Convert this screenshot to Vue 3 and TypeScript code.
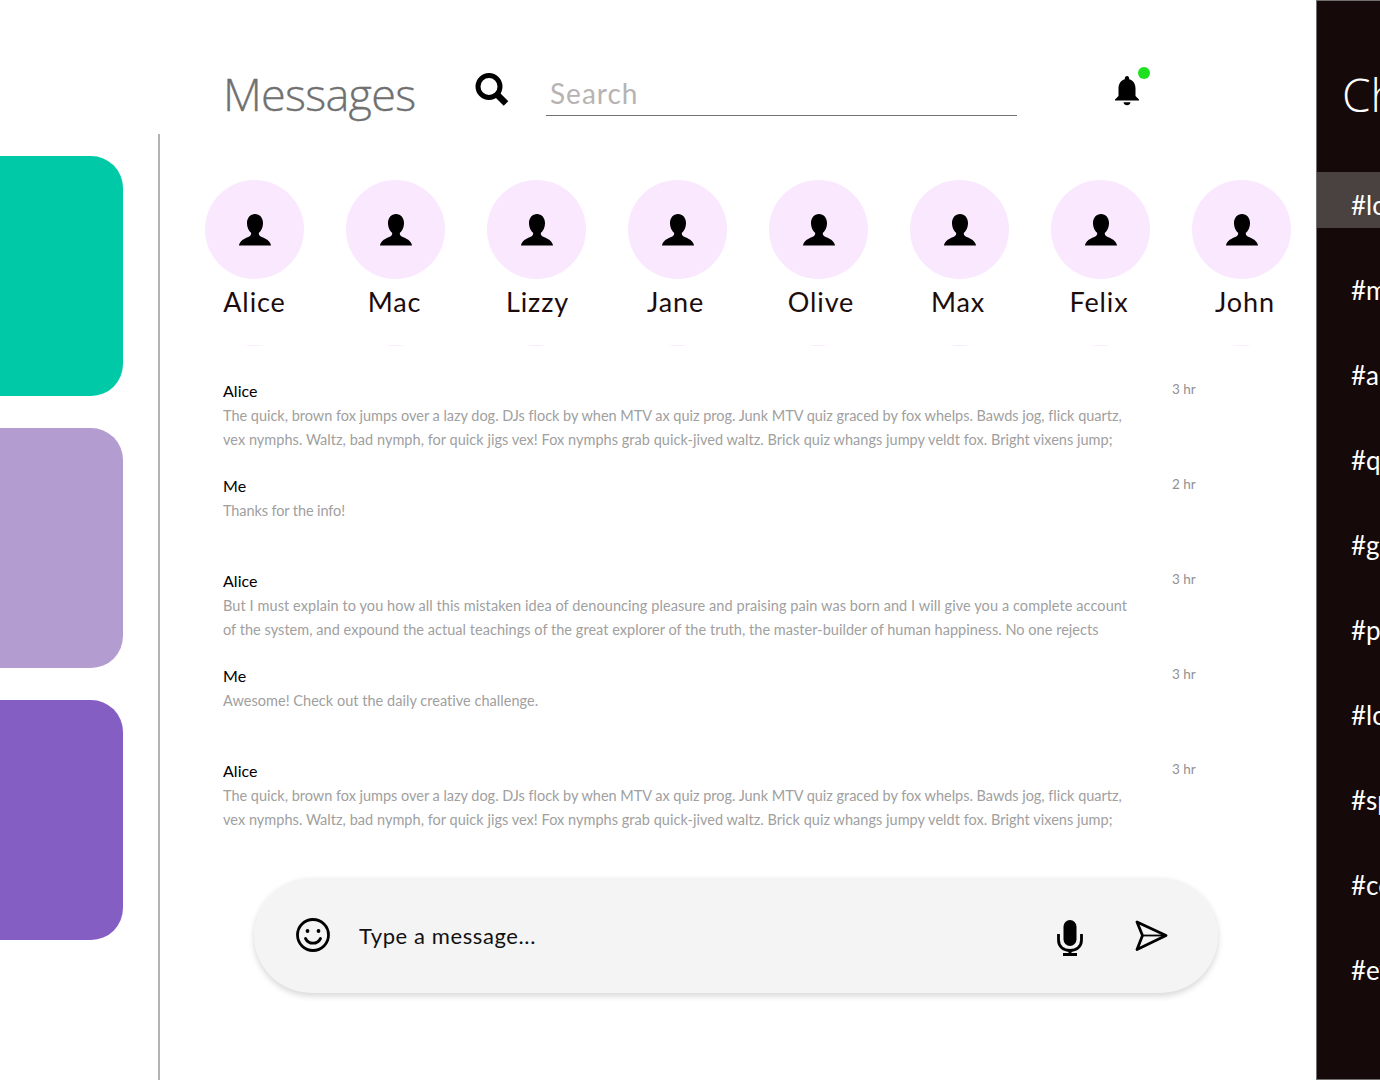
<script setup lang="ts">
interface Line { text: string; ls: number }
interface Msg { who: string; time: string; lines: Line[] }
interface Person { name: string; shift: number }
const people: Person[] = [
  { name: 'Alice', shift: 0 },
  { name: 'Mac', shift: -2 },
  { name: 'Lizzy', shift: 2 },
  { name: 'Jane', shift: -4 },
  { name: 'Olive', shift: 5 },
  { name: 'Max', shift: -3 },
  { name: 'Felix', shift: -3 },
  { name: 'John', shift: 7 },
]
const fox: Line[] = [
  { text: 'The quick, brown fox jumps over a lazy dog. DJs flock by when MTV ax quiz prog. Junk MTV quiz graced by fox whelps. Bawds jog, flick quartz,', ls: -0.02 },
  { text: 'vex nymphs. Waltz, bad nymph, for quick jigs vex! Fox nymphs grab quick-jived waltz. Brick quiz whangs jumpy veldt fox. Bright vixens jump;', ls: 0.03 },
]
const messages: Msg[] = [
  { who: 'Alice', time: '3 hr', lines: fox },
  { who: 'Me', time: '2 hr', lines: [{ text: 'Thanks for the info!', ls: -0.1 }] },
  { who: 'Alice', time: '3 hr', lines: [
    { text: 'But I must explain to you how all this mistaken idea of denouncing pleasure and praising pain was born and I will give you a complete account', ls: 0.08 },
    { text: 'of the system, and expound the actual teachings of the great explorer of the truth, the master-builder of human happiness. No one rejects', ls: 0.036 },
  ] },
  { who: 'Me', time: '3 hr', lines: [{ text: 'Awesome! Check out the daily creative challenge.', ls: 0.03 }] },
  { who: 'Alice', time: '3 hr', lines: fox },
]
const channels: string[] = ['#love', '#music', '#art', '#quotes', '#games', '#photos', '#lol', '#sports', '#code', '#events']
</script>

<template>
  <div class="page">
    <aside class="side">
      <div class="card teal"></div>
      <div class="card lilac"></div>
      <div class="card purple"></div>
    </aside>

    <main class="main">
      <header class="head">
        <h1 class="title">Messages</h1>
        <svg class="search-icon" width="34" height="34" viewBox="0 0 34 34">
          <circle cx="14" cy="13.500" r="11" fill="none" stroke="#000" stroke-width="5" />
          <path d="M21.500 21 L31 30.500" stroke="#000" stroke-width="6.500" fill="none" />
        </svg>
        <input class="search" placeholder="Search" />
        <div class="bell">
          <svg width="28" height="31" viewBox="0 0 28 31">
            <path d="M14 1c1.300 0 2.200 1 2.200 2.300v.9C20.300 5.300 22.500 9 22.500 13.500v7.500l3.500 3.400v1H2v-1l3.500-3.400v-7.500C5.500 9 7.700 5.300 11.800 4.200v-.9C11.800 2 12.700 1 14 1zM10.500 27.200h7C17.300 29 15.800 30.200 14 30.200s-3.300-1.200-3.500-3z" fill="#000" />
          </svg>
          <span class="dot"></span>
        </div>
      </header>

      <section class="people">
        <div v-for="p in people" :key="p.name" class="person">
          <div class="avatar">
            <svg width="34" height="33" viewBox="0 0 36 34" preserveAspectRatio="none">
              <path d="M18 1c-5 0-8.500 4-8.500 9.500 0 4.500 2 8 4.500 10 0 1.800-.5 2.800-2 3.600C7 26.500 2 27.700 1 33.500h34c-1-5.800-6-7-11-9.400-1.500-.8-2-1.800-2-3.600 2.500-2 4.500-5.500 4.500-10C26.500 5 23 1 18 1z" fill="#000" />
            </svg>
          </div>
          <div class="name" :style="{ marginLeft: p.shift + 'px' }">{{ p.name }}</div>
        </div>
        <div v-for="p in people" :key="p.name + '-next'" class="avatar"></div>
      </section>

      <section class="list">
        <article v-for="(m, i) in messages" :key="i" class="msg">
          <div class="msg-body">
            <div class="who">{{ m.who }}</div>
            <p v-for="(l, j) in m.lines" :key="j" class="line" :style="{ letterSpacing: l.ls + 'px' }">{{ l.text }}</p>
          </div>
          <div class="time">{{ m.time }}</div>
        </article>
      </section>

      <div class="composer">
        <svg class="smile" width="36" height="36" viewBox="0 0 36 36">
          <circle cx="18" cy="18" r="15.500" fill="none" stroke="#000" stroke-width="2.800" />
          <circle cx="12.500" cy="14" r="1.900" fill="#000" />
          <circle cx="23.500" cy="14" r="1.900" fill="#000" />
          <path d="M10.500 21.500c1.500 3 4.300 4.700 7.500 4.700s6-1.700 7.500-4.700" fill="none" stroke="#000" stroke-width="2.800" stroke-linecap="round" />
        </svg>
        <input class="type" placeholder="Type a message..." />
        <svg class="mic" width="26" height="36" viewBox="0 0 26 36">
          <rect x="6.500" y="0" width="13" height="26" rx="6.500" fill="#000" />
          <path d="M1.500 14v6c0 6.500 5 10.500 11.500 10.500S24.500 26.500 24.500 20v-6" fill="none" stroke="#000" stroke-width="2.800" />
          <rect x="11.500" y="30" width="3" height="4" fill="#000" />
          <rect x="6" y="33" width="14" height="3" fill="#000" />
        </svg>
        <svg class="send" width="33" height="31" viewBox="0 0 33 31">
          <path d="M2 2 L31 15.500 L2 29.500 L7.500 15.500 Z" fill="none" stroke="#000" stroke-width="2.800" stroke-linejoin="round" />
          <path d="M7.500 15.500 H30" fill="none" stroke="#000" stroke-width="1.800" />
        </svg>
      </div>
    </main>

    <aside class="chan">
      <div class="chan-title">Channels</div>
      <ul class="chan-list">
        <li v-for="(c, i) in channels" :key="c" class="chan-item" :class="{ on: i === 0 }">{{ c }}</li>
      </ul>
    </aside>
  </div>
</template>

<style>
html, body { margin: 0; background: #fff; }
</style>

<style scoped>
.page {
  display: flex;
  width: 1380px;
  height: 1080px;
  overflow: hidden;
  background: #fff;
  font-family: "Lato", "Liberation Sans", sans-serif;
}
.side {
  box-sizing: border-box;
  flex: 0 0 160px;
  margin-top: 134px;
  padding-top: 22px;
  border-right: 2px solid #b3b3b3;
  display: flex;
  flex-direction: column;
  gap: 32px;
}
.card { width: 123px; height: 240px; border-radius: 0 32px 32px 0; }
.teal { background: #00c9a7; }
.lilac { background: #b39cd0; }
.purple { background: #845ec2; }

.main { flex: 0 0 1156px; display: flex; flex-direction: column; }
.head {
  box-sizing: border-box;
  height: 180px;
  padding: 65px 0 0 63px;
  display: flex;
  align-items: flex-start;
}
.title {
  margin: 0;
  width: 251px;
  font: 300 45px/58px "Open Sans", sans-serif;
  -webkit-text-stroke: 0.3px #707070;
  color: #707070;
  letter-spacing: -0.75px;
}
.search-icon { margin: 8px 0 0 1px; }
.search {
  box-sizing: border-box;
  width: 471px;
  height: 51px;
  margin: 0 0 0 37px;
  padding: 5px 4px 0;
  border: 0;
  border-bottom: 1px solid #707070;
  outline: 0;
  background: transparent;
  font: 400 28px "Lato", sans-serif;
  letter-spacing: 1px;
}
.search::placeholder { color: #b8b3b3; opacity: 1; }
.bell { position: relative; margin: 10px 0 0 96px; width: 28px; height: 31px; }
.dot {
  position: absolute;
  left: 25px;
  top: -8px;
  width: 12px;
  height: 12px;
  border-radius: 50%;
  background: #1fe01f;
}

.people {
  height: 166px;
  margin-left: 45px;
  overflow: hidden;
  display: grid;
  grid-template-columns: repeat(8, 99px);
  column-gap: 42px;
  row-gap: 26px;
  align-content: start;
}
.person { display: flex; flex-direction: column; align-items: center; }
.avatar {
  width: 99px;
  height: 99px;
  border-radius: 50%;
  background: #f9e8fe;
  display: flex;
  align-items: center;
  justify-content: center;
}
.name {
  margin-top: 7px;
  height: 33px;
  font-size: 27px;
  line-height: 32px;
  color: #1d0c0c;
  letter-spacing: 0.9px;
}

.list { margin: 35px 0 0 63px; }
.msg { height: 95px; display: flex; align-items: flex-start; }
.msg-body { width: 949px; }
.who { font-size: 16px; line-height: 20px; color: #000; letter-spacing: 0.05px; }
.who + .line { margin-top: 3px; }
.line { margin: 0; font-size: 14.500px; line-height: 24px; color: #a0a0a0; white-space: nowrap; }
.time { margin-top: -1px; font-size: 13.500px; line-height: 18px; color: #919191; }

.composer {
  box-sizing: border-box;
  width: 964px;
  height: 115px;
  margin: 22px 0 0 94px;
  padding: 0 50px 0 41px;
  border-radius: 58px;
  background: #f4f4f4;
  box-shadow: 0 3px 6px rgba(0, 0, 0, 0.16);
  display: flex;
  align-items: center;
}
.smile { margin-top: -2px; }
.type {
  flex: 1;
  margin-left: 28px;
  padding: 0;
  border: 0;
  outline: 0;
  background: transparent;
  font: 400 22px "Lato", sans-serif;
  letter-spacing: 0.6px;
}
.type::placeholder { color: #111; opacity: 1; }
.mic { margin-top: 5px; }
.send { margin-left: 52px; }

.chan {
  box-sizing: border-box;
  flex: 0 0 64px;
  height: 1080px;
  overflow: hidden;
  border: 1px solid #707070;
  border-right: 0;
  background: #150a09;
  color: #fff;
}
.chan-title {
  height: 171px;
  padding: 64px 0 0 25px;
  box-sizing: border-box;
  font: 300 46px/58px "Open Sans", sans-serif;
  white-space: nowrap;
}
.chan-list { margin: 0; padding: 0; list-style: none; display: flex; flex-direction: column; gap: 29px; }
.chan-item {
  height: 56px;
  padding-left: 34px;
  font-size: 26px;
  line-height: 66px;
  white-space: nowrap;
}
.chan-item.on { background: #4a4240; }
</style>
